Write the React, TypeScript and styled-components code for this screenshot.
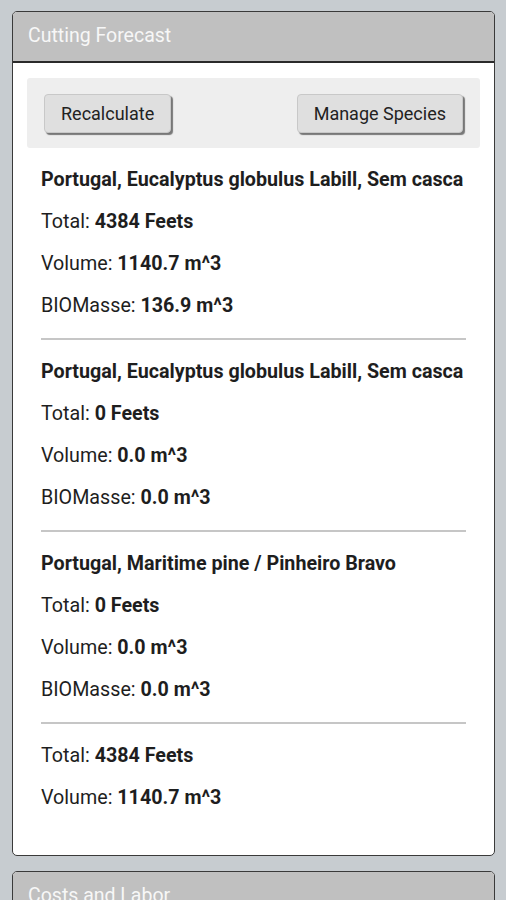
import { createGlobalStyle, styled } from "styled-components";

interface Species {
  name: string;
  total: number;
  volume: string;
  biomass: string;
}

const species: Species[] = [
  { name: "Portugal, Eucalyptus globulus Labill, Sem casca", total: 4384, volume: "1140.7", biomass: "136.9" },
  { name: "Portugal, Eucalyptus globulus Labill, Sem casca", total: 0, volume: "0.0", biomass: "0.0" },
  { name: "Portugal, Maritime pine / Pinheiro Bravo", total: 0, volume: "0.0", biomass: "0.0" },
];

const GlobalStyle = createGlobalStyle`
  html, body {
    margin: 0;
    padding: 0;
    background: #c7ccd0;
    font-family: Roboto, "Liberation Sans", sans-serif;
  }
`;

export default function App() {
  return (
    <Page>
      <GlobalStyle />
      <Panel>
        <PanelHeader>Cutting Forecast</PanelHeader>
        <PanelBody>
          <ButtonBar>
            <Button>Recalculate</Button>
            <Button>Manage Species</Button>
          </ButtonBar>
          <Content>
            {species.map((s, index) => (
              <Block key={index}>
                <Row>
                  <b>{s.name}</b>
                </Row>
                <Row>
                  Total: <b>{s.total} Feets</b>
                </Row>
                <Row>
                  Volume: <b>{s.volume} m^3</b>
                </Row>
                <Row>
                  BIOMasse: <b>{s.biomass} m^3</b>
                </Row>
              </Block>
            ))}
            <Block>
              <Row>
                Total: <b>4384 Feets</b>
              </Row>
              <Row>
                Volume: <b>1140.7 m^3</b>
              </Row>
            </Block>
          </Content>
        </PanelBody>
      </Panel>
      <Panel>
        <PanelHeader>Costs and Labor</PanelHeader>
        <PanelBody />
      </Panel>
    </Page>
  );
}

const Page = styled.div`
  display: flex;
  flex-direction: column;
  gap: 15px;
  padding: 11px 11px 0 12px;
  height: 900px;
  box-sizing: border-box;
  overflow: hidden;
`;

const Panel = styled.section`
  flex-shrink: 0;
  border: 1px solid #3a3a3a;
  border-radius: 5px;
  overflow: hidden;
  background: #fff;
`;

const PanelHeader = styled.div`
  height: 49px;
  line-height: 48px;
  padding-left: 15px;
  background: #c0c0c0;
  border-bottom: 2px solid #2a2a2a;
  color: #f7f7f7;
  font-size: 19.5px;
`;

const PanelBody = styled.div`
  padding: 15px 14px 36px 14px;
  min-height: 40px;
`;

const ButtonBar = styled.div`
  display: flex;
  justify-content: space-between;
  align-items: center;
  height: 70px;
  padding: 0 17px;
  background: #eeeeee;
  border-radius: 3px;
`;

const Button = styled.button`
  height: 39px;
  padding: 0 16px;
  background: #dfdfdf;
  border: 1px solid #c8c8c8;
  border-radius: 4px;
  box-shadow: 2px 2px 1px #777;
  font-family: Roboto, "Liberation Sans", sans-serif;
  font-size: 18px;
  color: #222;
`;

const Content = styled.div`
  padding: 11px 14px 0 14px;
`;

const Block = styled.div`
  & + & {
    margin-top: 11px;
    padding-top: 11px;
    border-top: 2px solid #c6c6c6;
  }
`;

const Row = styled.div`
  height: 42px;
  line-height: 42px;
  font-size: 19.7px;
  color: #1e1e1e;
  white-space: nowrap;

  b {
    font-weight: 700;
  }
`;
